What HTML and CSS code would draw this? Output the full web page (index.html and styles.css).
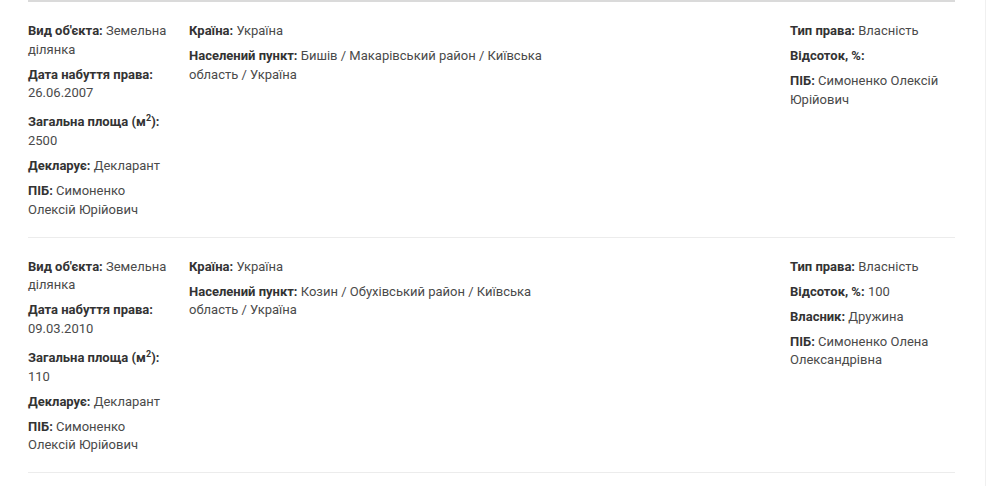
FILE: index.html
```html
<!DOCTYPE html>
<html lang="uk">
<head>
    <meta charset="UTF-8">
    <meta name="viewport" content="width=device-width, initial-scale=1.0">
    <title>Земельні ділянки</title>
    <link rel="stylesheet" href="styles.css">
</head>
<body>
    <div class="list">
        <div class="item">
            <div class="col first">
                <div class="field"><b>Вид об'єкта:</b> Земельна ділянка</div>
                <div class="field"><b>Дата набуття права:</b> 26.06.2007</div>
                <div class="field"><b>Загальна площа (м<sup>2</sup>):</b> 2500</div>
                <div class="field"><b>Декларує:</b> Декларант</div>
                <div class="field"><b>ПІБ:</b> Симоненко Олексій Юрійович</div>
            </div>
            <div class="col middle">
                <div class="field"><b>Країна:</b> Україна</div>
                <div class="field"><b>Населений пункт:</b> Бишів / Макарівський район / Київська область / Україна</div>
            </div>
            <div class="col last">
                <div class="field"><b>Тип права:</b> Власність</div>
                <div class="field"><b>Відсоток, %:</b></div>
                <div class="field"><b>ПІБ:</b> Симоненко Олексій Юрійович</div>
            </div>
        </div>

        <div class="item">
            <div class="col first">
                <div class="field"><b>Вид об'єкта:</b> Земельна ділянка</div>
                <div class="field"><b>Дата набуття права:</b> 09.03.2010</div>
                <div class="field"><b>Загальна площа (м<sup>2</sup>):</b> 110</div>
                <div class="field"><b>Декларує:</b> Декларант</div>
                <div class="field"><b>ПІБ:</b> Симоненко Олексій Юрійович</div>
            </div>
            <div class="col middle">
                <div class="field"><b>Країна:</b> Україна</div>
                <div class="field"><b>Населений пункт:</b> Козин / Обухівський район / Київська область / Україна</div>
            </div>
            <div class="col last">
                <div class="field"><b>Тип права:</b> Власність</div>
                <div class="field"><b>Відсоток, %:</b> 100</div>
                <div class="field"><b>Власник:</b> Дружина</div>
                <div class="field"><b>ПІБ:</b> Симоненко Олена Олександрівна</div>
            </div>
        </div>
    </div>
    <div class="edge"></div>
</body>
</html>
```

FILE: styles.css
```css
body {
    margin: 0;
    background: #fff;
    font-family: Roboto, "Noto Sans", sans-serif;
    font-size: 13px;
    color: #4a4a4a;
}

.list {
    width: 927px;
    margin-left: 28px;
    border-top: solid 2px #dadada;
}

.item {
    display: flex;
    padding: 20px 0 11px;
    border-bottom: solid 1px #ececec;
}

.col {
    flex: none;
}

.first {
    width: 144px;
    margin-right: 17px;
}

.middle {
    width: 370px;
    margin-right: 231px;
}

.last {
    width: 160px;
}

.field {
    line-height: 18.6px;
    margin-bottom: 6.4px;
}

.field b {
    color: #333;
    font-weight: bold;
}

sup {
    font-size: 9px;
}

.edge {
    position: fixed;
    top: 0;
    right: 2px;
    width: 1px;
    height: 100%;
    background: #f0f0f0;
}
```
